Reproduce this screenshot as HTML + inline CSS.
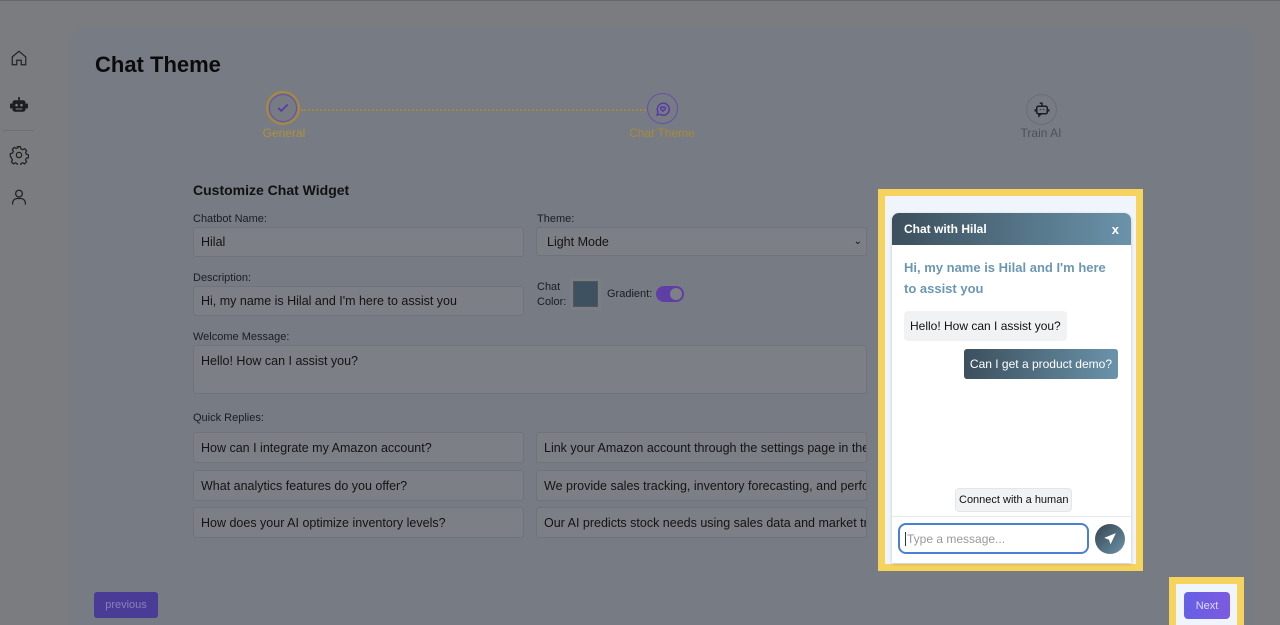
<!DOCTYPE html>
<html style="width:1280px;height:625px;overflow:hidden"><head><style>
*{box-sizing:border-box;margin:0;padding:0}
body{width:1280px;height:625px;overflow:hidden;background:#7b7c80;font-family:"Liberation Sans",sans-serif;position:relative;color:#111}
.abs{position:absolute}
.card{left:70px;top:28px;width:1183px;height:597px;background:#767b84;border-radius:14px 14px 0 0}
.lbl{font-size:11px;color:#1c1d20}
.inp{position:absolute;background:#7c7f85;border:1px solid #6f737a;border-radius:3px;font-size:12.5px;color:#141414;padding:0 7px;display:flex;align-items:center;white-space:nowrap;overflow:hidden}
.step{width:34px;height:34px;border-radius:50%;display:flex;align-items:center;justify-content:center}
.slbl{font-size:12px;text-align:center;width:120px}
</style></head><body>
<div class="abs" style="left:0;top:0;width:1280px;height:1px;background:#666"></div>
<svg class="abs" style="left:10px;top:49px" width="18" height="18" viewBox="0 0 24 24" fill="none" stroke="#222" stroke-width="1.6"><path d="M3 10.5 12 3l9 7.5V21h-6v-6h-6v6H3z"/></svg>
<svg class="abs" style="left:9px;top:97px" width="20" height="18" viewBox="0 0 24 22" fill="#1d1d1f"><rect x="11" y="0" width="2" height="4"/><rect x="4" y="4" width="16" height="14" rx="3"/><rect x="1" y="8" width="3" height="6" rx="1"/><rect x="20" y="8" width="3" height="6" rx="1"/><circle cx="9" cy="10" r="1.6" fill="#7b7c80"/><circle cx="15" cy="10" r="1.6" fill="#7b7c80"/><rect x="8" y="14" width="8" height="1.4" fill="#7b7c80"/></svg>
<div class="abs" style="left:2px;top:130px;width:32px;height:1px;background:#6e7073"></div>
<svg class="abs" style="left:9px;top:145px" width="20" height="20" viewBox="0 0 24 24" fill="none" stroke="#222" stroke-width="1.5"><circle cx="12" cy="12" r="3.2"/><path d="M10.3 2h3.4l.6 2.6 2 1 2.4-1.2 2.4 2.4-1.2 2.4 1 2 2.6.6v3.4l-2.6.6-1 2 1.2 2.4-2.4 2.4-2.4-1.2-2 1-.6 2.6h-3.4l-.6-2.6-2-1-2.4 1.2-2.4-2.4 1.2-2.4-1-2L1.6 13.7v-3.4l2.6-.6 1-2L4 5.3 6.4 2.9l2.4 1.2 2-1z"/></svg>
<svg class="abs" style="left:10px;top:188px" width="18" height="18" viewBox="0 0 24 24" fill="none" stroke="#222" stroke-width="1.7"><circle cx="12" cy="7.5" r="4.5"/><path d="M3.5 22v-2a6 6 0 0 1 6-6h5a6 6 0 0 1 6 6v2"/></svg>
<div class="abs card"></div>
<div class="abs" style="left:95px;top:52px;font-size:22px;font-weight:bold;color:#0b0b0c">Chat Theme</div>
<div class="abs" style="left:301px;top:109px;width:345px;border-top:2px dotted #a6883a"></div>
<div class="abs step" style="left:266px;top:91px;border:2px solid #a98a38;background:#767b84"><div style="width:28px;height:28px;border-radius:50%;border:1.5px solid #6a4ea8;display:flex;align-items:center;justify-content:center"><svg width="14" height="14" viewBox="0 0 24 24" fill="none" stroke="#5b39a6" stroke-width="3"><path d="M4 12l5 5L20 6"/></svg></div></div>
<div class="abs slbl" style="left:224px;top:126px;color:#b0913c">General</div>
<div class="abs step" style="left:647px;top:93px;width:31px;height:31px;border:1.5px solid #6a4ea8"><svg width="18" height="18" viewBox="0 0 24 24" fill="none" stroke="#5b39a6" stroke-width="2"><path d="M4 20l1.3-4A8 8 0 1 1 8 19z"/><path d="M12 15l-3-3a1.7 1.7 0 0 1 3-2 1.7 1.7 0 0 1 3 2z"/></svg></div>
<div class="abs slbl" style="left:602px;top:126px;color:#a88a3a">Chat Theme</div>
<div class="abs step" style="left:1026px;top:94px;width:31px;height:31px;border:1.5px solid #6b6e73"><svg width="18" height="18" viewBox="0 0 24 24" fill="none" stroke="#1e1e1e" stroke-width="2"><path d="M9 3h3v4"/><rect x="5" y="7" width="14" height="10" rx="2"/><path d="M8 17v3l3-3"/><path d="M3 11v3M21 11v3"/><path d="M10 11v1M14 11v1"/></svg></div>
<div class="abs slbl" style="left:981px;top:126px;color:#4f5257">Train AI</div>
<div class="abs" style="left:193px;top:182px;font-size:14px;font-weight:bold;color:#111">Customize Chat Widget</div>
<div class="abs lbl" style="left:193px;top:213px">Chatbot Name:</div>
<div class="inp" style="left:193px;top:227px;width:331px;height:30px">Hilal</div>
<div class="abs lbl" style="left:537px;top:213px">Theme:</div>
<div class="inp" style="left:536px;top:227px;width:331px;height:29px;padding-left:10px">Light Mode<span style="position:absolute;right:4px;font-size:10px">⌄</span></div>
<div class="abs lbl" style="left:193px;top:272px">Description:</div>
<div class="inp" style="left:193px;top:286px;width:331px;height:30px">Hi, my name is Hilal and I'm here to assist you</div>
<div class="abs lbl" style="left:537px;top:280px;line-height:15px">Chat<br>Color:</div>
<div class="abs" style="left:570px;top:278px;width:31px;height:32px;background:#7a7e85;border-radius:2px;padding:3px"><div style="width:100%;height:100%;background:#3e5160;border:1px solid #555"></div></div>
<div class="abs lbl" style="left:607px;top:288px">Gradient:</div>
<div class="abs" style="left:656px;top:286px;width:28px;height:16px;border-radius:8px;background:#5f3ea5"><div style="position:absolute;right:2px;top:2px;width:12px;height:12px;border-radius:50%;background:#7e8087"></div></div>
<div class="abs lbl" style="left:193px;top:331px">Welcome Message:</div>
<div class="inp" style="left:193px;top:345px;width:674px;height:49px;align-items:flex-start;padding-top:8px">Hello! How can I assist you?</div>
<div class="abs lbl" style="left:193px;top:412px">Quick Replies:</div>
<div class="inp" style="left:193px;top:432px;width:331px;height:31px">How can I integrate my Amazon account?</div>
<div class="inp" style="left:536px;top:432px;width:331px;height:31px">Link your Amazon account through the settings page in the d</div>
<div class="inp" style="left:193px;top:470px;width:331px;height:31px">What analytics features do you offer?</div>
<div class="inp" style="left:536px;top:470px;width:331px;height:31px">We provide sales tracking, inventory forecasting, and perfor</div>
<div class="inp" style="left:193px;top:507px;width:331px;height:31px">How does your AI optimize inventory levels?</div>
<div class="inp" style="left:536px;top:507px;width:331px;height:31px">Our AI predicts stock needs using sales data and market tre</div>
<div class="abs" style="left:94px;top:592px;width:64px;height:26px;background:#4a3c96;border-radius:3px;color:#8a80bc;font-size:11px;display:flex;align-items:center;justify-content:center">previous</div>
<div class="abs" style="left:878px;top:189px;width:265px;height:382px;background:#f6d35d"></div>
<div class="abs" style="left:885px;top:196px;width:251px;height:368px;background:#eff5fb"></div>
<div class="abs" style="left:892px;top:213px;width:239px;height:350px;background:#fff;border-radius:7px 7px 0 0;box-shadow:0 1px 3px rgba(0,0,0,.2);overflow:hidden">
 <div style="height:32px;background:linear-gradient(90deg,#3c4f5d,#6a93aa);color:#fff;font-size:12px;font-weight:bold;display:flex;align-items:center;justify-content:space-between;padding:0 12px">Chat with Hilal<span style="font-size:13px">x</span></div>
 <div style="padding:12px 12px 0;color:#6b97b3;font-size:13px;font-weight:bold;line-height:21px">Hi, my name is Hilal and I'm here to assist you</div>
 <div style="margin:12px 0 0 12px;display:inline-block;background:#f1f2f4;border-radius:4px;padding:8px 6px;font-size:12px;color:#111">Hello! How can I assist you?</div>
 <div style="position:absolute;right:13px;top:136px;background:linear-gradient(90deg,#3c4f5d,#6a93aa);border-radius:3px;padding:8px 6px;font-size:12px;color:#fff">Can I get a product demo?</div>
 <div style="position:absolute;left:63px;top:275px;background:#f1f2f4;border:1px solid #e4e6e9;border-radius:4px;padding:5px 3px;font-size:11px;color:#111">Connect with a human</div>
 <div style="position:absolute;left:0;top:303px;width:100%;height:1px;background:#e6e8ea"></div>
 <div style="position:absolute;left:6px;top:310px;width:191px;height:31px;border:2px solid #4a7fd4;border-radius:8px;font-size:12px;color:#999;display:flex;align-items:center;padding-left:5px"><span style="border-left:1px solid #333;height:14px;margin-right:1px"></span>Type a message...</div>
 <div style="position:absolute;left:203px;top:311px;width:30px;height:30px;border-radius:50%;background:linear-gradient(135deg,#34444f,#6d93aa);display:flex;align-items:center;justify-content:center"><svg width="14" height="14" viewBox="0 0 24 24" fill="#fff"><path d="M22 2 2 10l8 3 3 8z"/></svg></div>
</div>
<div class="abs" style="left:1169px;top:577px;width:75px;height:48px;background:#f6d35d"></div>
<div class="abs" style="left:1176px;top:584px;width:61px;height:41px;background:#eff5fb"></div>
<div class="abs" style="left:1184px;top:592px;width:46px;height:27px;border-radius:4px;background:linear-gradient(90deg,#6560e6,#7d5ae0);color:#dcdcf5;font-size:11px;display:flex;align-items:center;justify-content:center">Next</div>
</body></html>
